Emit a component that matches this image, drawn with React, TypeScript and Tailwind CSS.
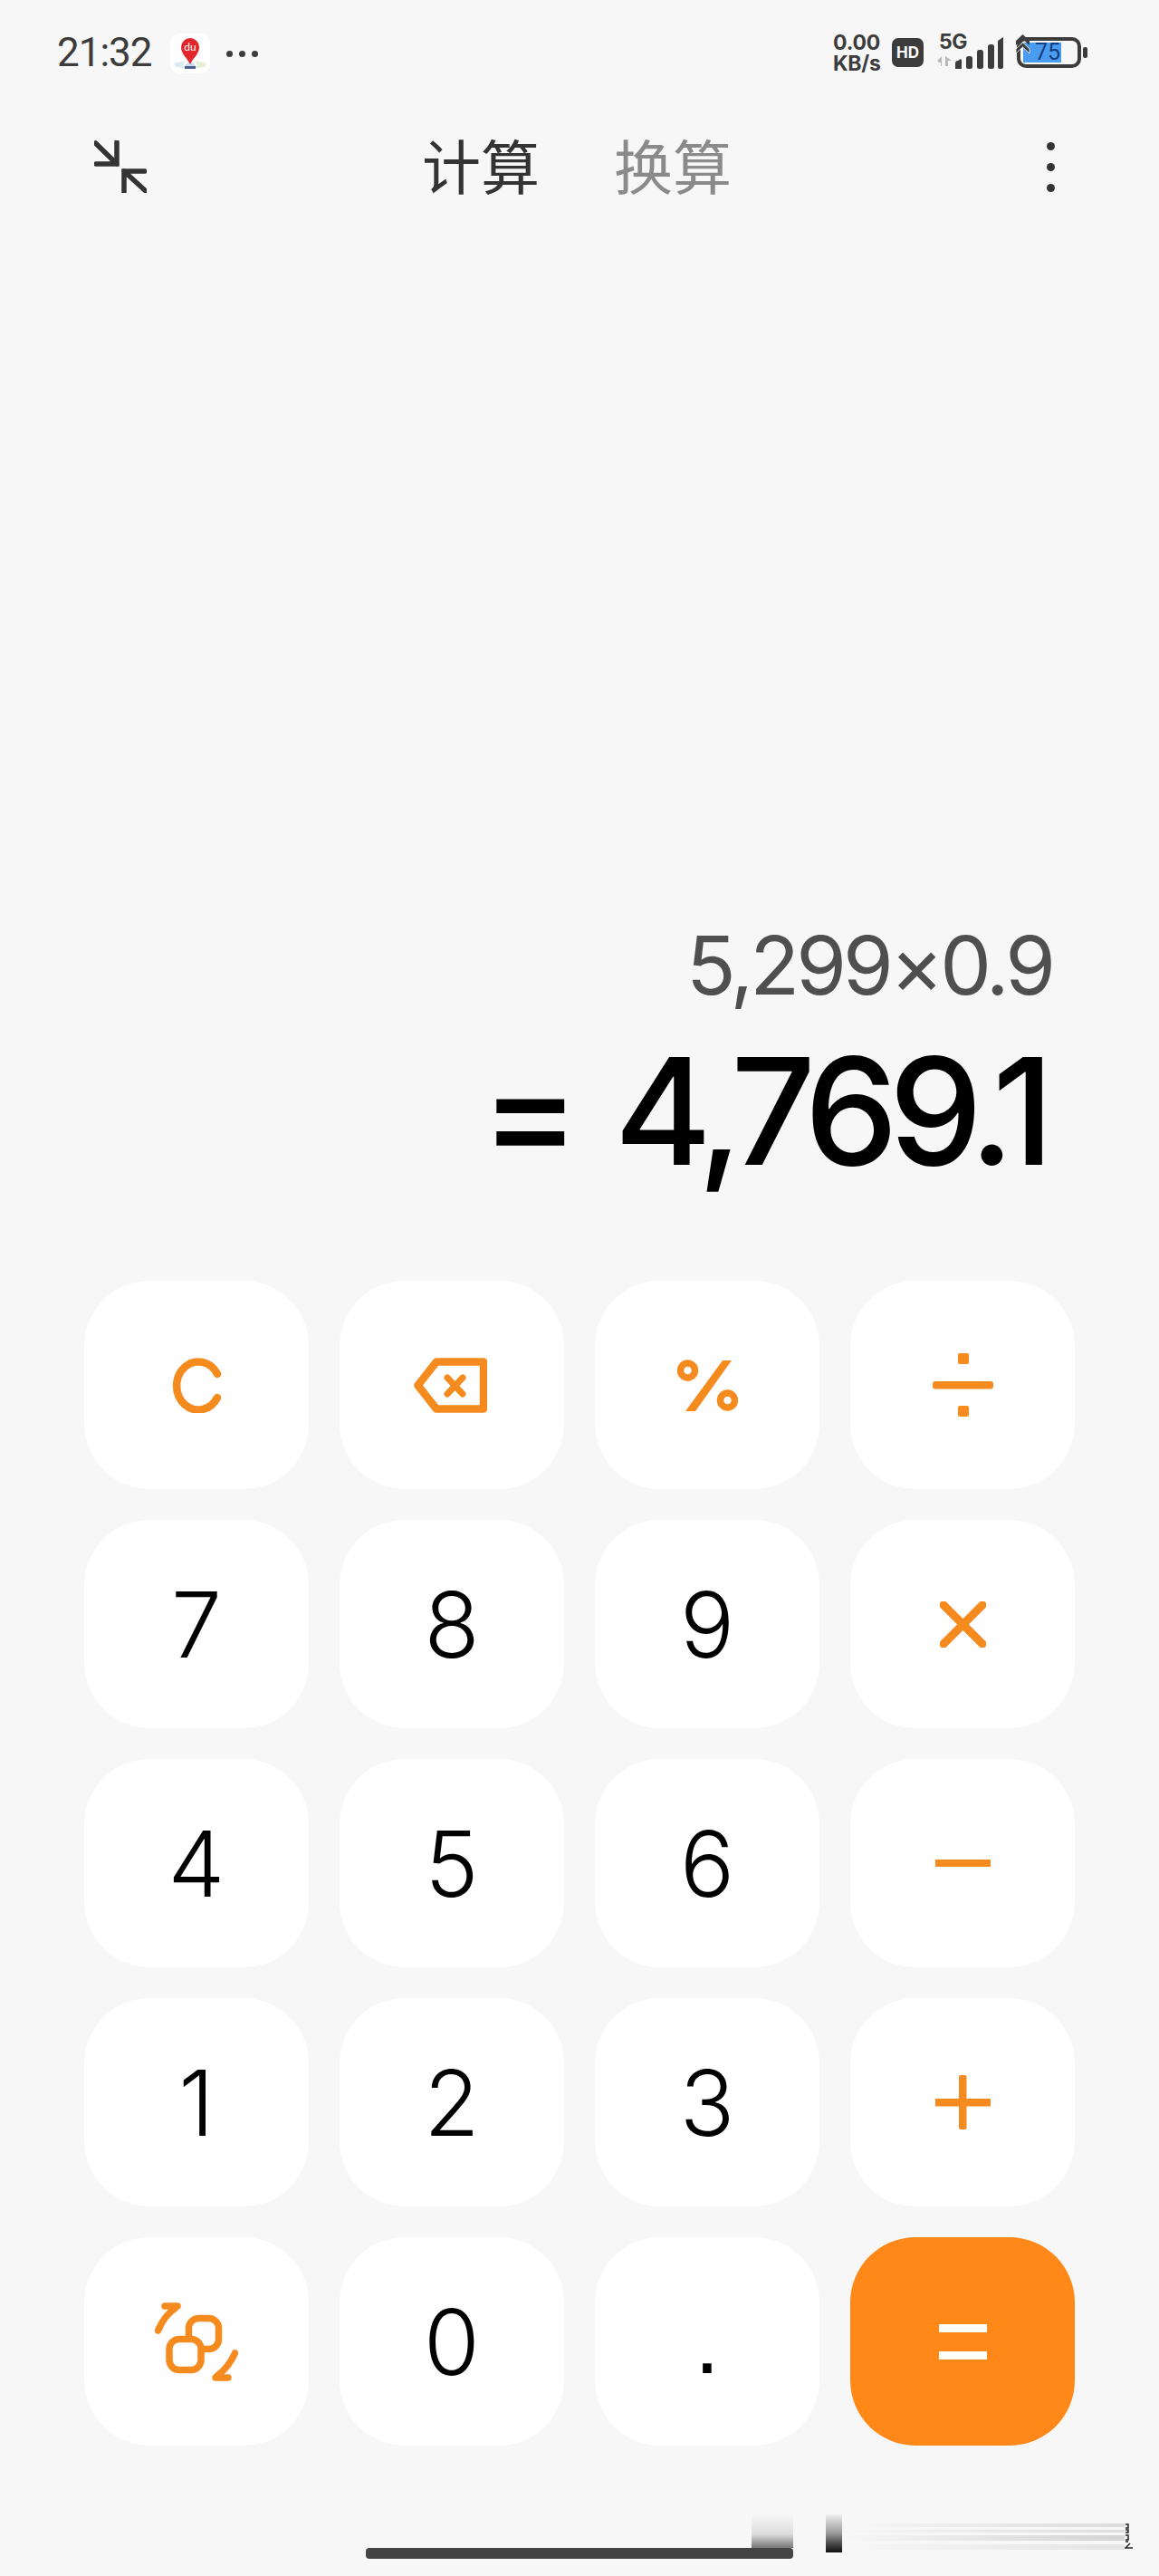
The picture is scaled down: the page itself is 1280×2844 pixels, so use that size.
const ORANGE = '#f58a1f';

function MapIcon() {
  return (
    <div className="w-[44px] h-[44px] rounded-[10px] bg-white shrink-0 ml-[20px] mt-[1px]">
      <svg width="44" height="44" viewBox="0 0 44 44">
        <path d="M4 33 L16 30 L14 38 L6 37 Z" fill="#dbeaf3" />
        <path d="M40 33 L28 30 L30 38 L38 37 Z" fill="#e6efd6" />
        <path d="M22 29 L14 38 H30 Z" fill="#c9dcec" />
        <rect x="16" y="36" width="12" height="3" fill="#4a5f8c" />
        <g transform="translate(0 3)">
          <path d="M22 31 C19 24 12 20 12 12 A10 10 0 0 1 32 12 C32 20 25 24 22 31 Z" fill="#e1262c" />
          <text x="22" y="16" textAnchor="middle" fontSize="12" fill="#fff" fontFamily="Lato, sans-serif">du</text>
        </g>
      </svg>
    </div>
  );
}

function StatusBar() {
  return (
    <div className="h-[100px] shrink-0 flex justify-between pl-[63px] pr-[78px] pt-[36px] text-[#3c3c3c]">
      <div className="flex items-start">
        <span className="text-[44px] leading-[44px] tracking-[-1px] font-normal font-['Roboto',sans-serif]">21:32</span>
        <MapIcon />
        <div className="flex gap-[7px] ml-[18px] mt-[20px]">
          <span className="w-[7px] h-[7px] rounded-full bg-[#3c3c3c]" />
          <span className="w-[7px] h-[7px] rounded-full bg-[#3c3c3c]" />
          <span className="w-[7px] h-[7px] rounded-full bg-[#3c3c3c]" />
        </div>
      </div>
      <div className="flex items-start font-['Inter',sans-serif] font-bold">
        <div className="flex flex-col text-[23px] leading-[23px] tracking-[-0.2px] w-[56px]">
          <span>0.00</span>
          <span>KB/s</span>
        </div>
        <span className="w-[35px] h-[32px] rounded-[7px] bg-[#3c3c3c] text-white text-[17px] leading-[32px] text-center ml-[9px] mt-[6px]">HD</span>
        <div className="ml-[14px] flex flex-col w-[75px] h-[42px]">
          <span className="pl-[3px] text-[23px] leading-[21px] tracking-[-0.5px]">5G</span>
          <svg className="mt-[-21px]" width="75" height="42" viewBox="0 0 75 42">
            <path d="M1 31 L6 26 V37 H5 V33 H3 Z" fill="#b9b9b9" />
            <path d="M10 26 L17 31 H13 V37 H10 Z" fill="#b9b9b9" />
            <path d="M21 34 a3 3 0 0 1 3 -3 l3 -2 a2 2 0 0 1 1 2 V40 H21 Z" fill="#3c3c3c" />
            <rect x="33" y="26" width="7" height="14" rx="2.5" fill="#3c3c3c" />
            <rect x="45" y="19" width="7" height="21" rx="2.5" fill="#3c3c3c" />
            <rect x="57" y="13" width="7" height="27" rx="2.5" fill="#3c3c3c" />
            <path d="M68 9 L74 5 V38 a2 2 0 0 1 -2 2 H70 a2 2 0 0 1 -2 -2 Z" fill="#3c3c3c" />
          </svg>
        </div>
        <div className="ml-[13px] relative w-[80px] h-[42px]">
          <div className="absolute left-[1px] top-[5px] w-[71px] h-[34px] rounded-[10px] border-[4px] border-[#3c3c3c]" />
          <span className="absolute left-[8px] top-[11px] w-[42px] h-[22px] bg-[#4a9cf0] text-[#123e7d] text-[25px] leading-[22px] font-normal text-right pr-[1px] font-['Roboto',sans-serif]">75</span>
          <svg className="absolute left-0 top-0" width="80" height="42" viewBox="0 0 80 42">
            <path d="M0 9 L7.5 2 L15 9 V14 L7.5 7 L0 14 Z" fill="#3c3c3c" />
            <path d="M0 18 L7.5 11 L15 18 V23 L7.5 16 L0 23 Z" fill="#3c3c3c" stroke="#f7f7f7" strokeWidth="0.8" />
            <rect x="74" y="16" width="5" height="12" rx="2" fill="#3c3c3c" />
          </svg>
        </div>
      </div>
    </div>
  );
}

function Header() {
  return (
    <div className="h-[168px] shrink-0 grid grid-cols-3 items-center pl-[104px] pr-[115px]">
      <svg width="58" height="58" viewBox="0 0 58 58" fill="none" stroke="#333" strokeWidth="5.5" strokeLinecap="round">
        <path d="M1.5 3 L25 26 M25 2 V26 H2" />
        <path d="M57 56 L33 34 M33 57 V34 H56" />
      </svg>
      <div className="flex justify-center gap-[82px] text-[65px] leading-[76px] font-normal mt-[-6px] ml-[5px] font-['Noto_Sans_CJK_SC',sans-serif]">
        <span className="text-[#333] whitespace-nowrap">计算</span>
        <span className="text-[#8a8a8a] whitespace-nowrap">换算</span>
      </div>
      <div className="flex flex-col items-end gap-[14px]">
        <span className="w-[9px] h-[9px] rounded-full bg-[#333]" />
        <span className="w-[9px] h-[9px] rounded-full bg-[#333]" />
        <span className="w-[9px] h-[9px] rounded-full bg-[#333]" />
      </div>
    </div>
  );
}

function Display() {
  return (
    <div className="flex-1 flex flex-col items-end justify-end pr-[118px] pb-[102px] font-['Inter',sans-serif]">
      <div className="text-[90px] leading-[100px] text-[#4f4f4f] tracking-[-4px] font-normal mb-[26px]">5,299×0.9</div>
      <div className="flex items-center text-black text-[164px] leading-[170px] font-medium tracking-[-10px] mr-[8px]">
        <span className="mr-[48px]">=</span>
        <span>4,769.1</span>
      </div>
    </div>
  );
}

function Clear() {
  return (
    <svg width="56" height="61" viewBox="0 0 56 61" fill="none" stroke={ORANGE} strokeWidth="8.5" strokeLinecap="round">
      <path d="M51 18 A24 26.5 0 1 0 51 44" />
    </svg>
  );
}

function Backspace() {
  return (
    <svg className="ml-[-3px]" width="81" height="61" viewBox="0 0 81 61" fill="none" stroke={ORANGE} strokeLinejoin="round" strokeLinecap="round">
      <path d="M77 4.5 H25 L4.5 30.5 L25 56.5 H77 Z" strokeWidth="8.5" />
      <path d="M37 22 L54 40 M54 22 L37 40" strokeWidth="7" />
    </svg>
  );
}

function Percent() {
  return (
    <svg width="67" height="57" viewBox="0 0 67 57" fill="none" stroke={ORANGE} strokeWidth="7.5">
      <circle cx="11.5" cy="12" r="8" />
      <circle cx="55.5" cy="45" r="8" />
      <polygon points="50,1 60,1 20,57 9,57" fill={ORANGE} stroke="none" />
    </svg>
  );
}

function Divide() {
  return (
    <svg width="67" height="70" viewBox="0 0 67 70" fill={ORANGE}>
      <rect x="28" y="0" width="12" height="12" rx="2" />
      <rect x="0" y="31" width="67" height="8.5" rx="3" />
      <rect x="28" y="58" width="12" height="12" rx="2" />
    </svg>
  );
}

function Times() {
  return (
    <svg width="51" height="51" viewBox="0 0 51 51" fill="none" stroke={ORANGE} strokeWidth="9" strokeLinecap="round">
      <path d="M4 4 L47 47 M47 4 L4 47" />
    </svg>
  );
}

function Minus() {
  return <div className="w-[61px] h-[8px] bg-[#f58a1f]" />;
}

function Plus() {
  return (
    <svg width="61" height="60" viewBox="0 0 61 60" fill={ORANGE}>
      <rect x="0" y="26" width="61" height="8.5" />
      <rect x="26" y="0" width="8.5" height="60" rx="2" />
    </svg>
  );
}

function Convert() {
  return (
    <svg width="92" height="87" viewBox="0 0 92 87" fill="none" stroke={ORANGE} strokeLinecap="round" strokeLinejoin="round">
      <rect x="37.5" y="17.5" width="33" height="34" rx="11" strokeWidth="7.5" />
      <rect x="16" y="40.5" width="35" height="34" rx="11" strokeWidth="7.5" fill="#fff" />
      <path d="M3.5 31 C8 20 14 12 23 6 M11 4 H25" strokeWidth="7.5" />
      <path d="M88.5 56 C84 66 78 74 69 81 M67 83 H81" strokeWidth="7.5" />
    </svg>
  );
}

function Key({ children, accent }: { children: React.ReactNode; accent?: boolean }) {
  return (
    <div className={`h-[230px] rounded-[72px] flex items-center justify-center ${accent ? 'bg-[#ff8819]' : 'bg-white'}`}>
      {children}
    </div>
  );
}

function Digit({ value }: { value: string }) {
  return (
    <Key>
      <span className="text-[100px] leading-none text-black font-light mt-[2px] font-['Inter',sans-serif]">{value}</span>
    </Key>
  );
}

function Keypad() {
  return (
    <div className="shrink-0 grid grid-cols-[repeat(4,248px)] auto-rows-[230px] gap-[34px] pl-[93px]">
      <Key><Clear /></Key>
      <Key><Backspace /></Key>
      <Key><Percent /></Key>
      <Key><Divide /></Key>
      <Digit value="7" />
      <Digit value="8" />
      <Digit value="9" />
      <Key><Times /></Key>
      <Digit value="4" />
      <Digit value="5" />
      <Digit value="6" />
      <Key><Minus /></Key>
      <Digit value="1" />
      <Digit value="2" />
      <Digit value="3" />
      <Key><Plus /></Key>
      <Key><Convert /></Key>
      <Digit value="0" />
      <Key>
        <span className="text-[100px] leading-none text-black font-['Liberation_Sans',sans-serif]">.</span>
      </Key>
      <Key accent>
        <div className="flex flex-col gap-[21px]">
          <span className="block w-[53px] h-[9px] bg-white" />
          <span className="block w-[53px] h-[9px] bg-white" />
        </div>
      </Key>
    </div>
  );
}

function BottomArea() {
  return (
    <div className="h-[144px] shrink-0 flex items-start pl-[404px] pt-[76px]">
      <div className="flex flex-col items-end w-[472px]">
        <div className="w-[46px] h-[37px] bg-linear-to-b from-[#f7f7f7] via-[#dcdcdc] via-60% to-[#777]" />
        <div className="w-full h-[12px] rounded-[4px] bg-[#444]" />
      </div>
      <div className="w-[18px] h-[42px] ml-[36px] bg-linear-to-b from-[#efefef] via-[#999] to-[#111]" />
      <div className="w-[312px] pt-[10px] flex flex-col">
        <div className="h-[4px] bg-linear-to-r from-[#f7f7f7] to-[#dcdcdc]" />
        <div className="h-[3px]" />
        <div className="h-[3px] bg-linear-to-r from-[#f7f7f7] to-[#dcdcdc]" />
        <div className="h-[3px]" />
        <div className="h-[6px] bg-linear-to-r from-[#f7f7f7] to-[#d4d4d4]" />
        <div className="h-[4px]" />
        <div className="h-[6px] bg-linear-to-r from-[#f7f7f7] to-[#e4e4e4]" />
      </div>
      <svg className="mt-[10px]" width="10" height="30" viewBox="0 0 10 30" fill="none" stroke="#222" strokeWidth="1.5">
        <path d="M1 1 H4 V5 H1 M1 7 H4 V10 H1" />
        <path d="M1 13 H4 V18 H1 M1 20 H4" />
        <path d="M6 22 L1 27 H9" />
      </svg>
    </div>
  );
}

export default function App() {
  return (
    <div className="w-[1280px] h-[2844px] bg-[#f7f7f7] flex flex-col overflow-hidden">
      <StatusBar />
      <Header />
      <Display />
      <Keypad />
      <BottomArea />
    </div>
  );
}
